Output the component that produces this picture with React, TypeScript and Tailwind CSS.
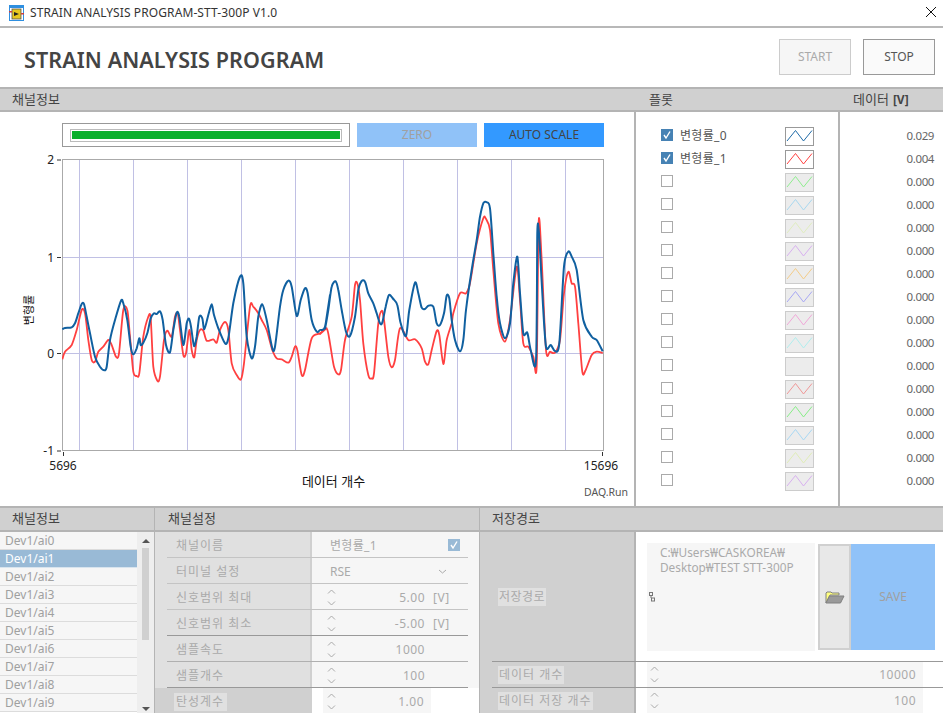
import type { ReactNode } from "react";

const font = { fontFamily: '"Noto Sans", "Noto Sans CJK KR", sans-serif' };

// traced from the plot, in plot zoom coordinates: [x, y]
const blueA = [[67,538],[75,534],[95,532],[105,520],[115,490],[125,462],[132,462],[140,500],[150,550],[165,620],[180,650],[193,661],[200,650],[210,570],[225,510],[243,452],[250,460],[262,510],[272,590],[280,613],[290,595],[298,565],[302,585],[310,578],[322,550],[332,505],[342,490],[350,492],[360,484],[368,510],[378,585],[390,607],[400,540],[410,488],[418,500],[430,585],[440,520],[447,506],[453,530],[462,588],[470,560],[478,500],[487,505],[493,538],[505,495],[515,463],[522,495],[535,535],[555,580],[565,565],[580,460],[600,380],[610,400],[620,560],[635,625],[645,590],[655,500],[667,463],[680,510],[697,595],[705,590],[720,470],[730,420],[745,392],[755,410],[770,498],[782,450],[795,415],[803,430],[815,510],[830,545],[840,540],[855,530],[870,435]];
const blueB = [[15,535],[25,480],[35,410],[47,394],[55,420],[65,480],[78,545],[90,558],[105,500],[115,420],[125,393],[135,395],[145,430],[160,460],[170,490],[180,520],[187,518],[197,470],[207,435],[220,447],[232,465],[242,520],[258,558],[268,480],[285,398],[295,430],[305,473],[315,477],[325,467],[340,470],[350,520],[360,525],[372,490],[380,437],[388,445],[395,510],[405,570],[420,604],[430,570],[438,480],[455,360],[470,270],[480,200],[490,160],[500,157],[510,175],[520,310],[530,440],[540,520],[555,565],[570,520],[580,400],[592,320],[600,430],[610,550],[622,548],[632,600],[648,632],[652,250],[656,240],[660,300],[668,450],[678,590],[692,585],[705,603],[718,580],[732,350],[745,305],[755,320],[770,360],[790,510],[815,560],[830,570],[848,604]];
const redA = [[67,628],[75,605],[95,585],[110,540],[125,480],[135,490],[145,570],[155,630],[165,635],[175,605],[190,590],[205,570],[215,585],[228,620],[237,610],[250,480],[262,480],[270,560],[280,665],[290,678],[298,670],[310,560],[325,500],[332,505],[340,650],[352,692],[360,680],[372,570],[382,542],[395,560],[405,500],[413,490],[420,540],[430,615],[438,610],[448,540],[455,600],[463,622],[470,570],[480,540],[490,542],[500,572],[520,568],[530,578],[540,540],[555,516],[565,540],[575,640],[590,675],[603,688],[612,640],[630,470],[640,470],[655,490],[665,510],[680,540],[697,600],[710,625],[725,628],[745,638],[755,620],[765,590],[772,600],[785,675],[795,660],[815,565],[840,550],[860,535]];
const redB = [[0,552],[20,535],[30,580],[42,650],[55,673],[63,660],[75,570],[95,500],[105,405],[112,400],[120,450],[130,580],[145,675],[155,685],[162,670],[175,520],[185,482],[192,510],[205,620],[215,652],[225,630],[240,535],[265,570],[285,568],[305,595],[315,635],[325,643],[335,600],[350,543],[358,555],[370,642],[380,570],[395,520],[400,490],[420,430],[438,430],[450,400],[470,280],[490,205],[497,205],[510,240],[520,360],[535,520],[555,575],[570,510],[590,350],[600,450],[610,580],[625,590],[640,620],[650,648],[656,215],[665,330],[678,600],[690,605],[705,608],[720,570],[732,430],[745,365],[755,400],[765,410],[775,520],[787,665],[797,660],[815,615],[830,605],[848,609]];

function toPage(a: number[][], b: number[][]) {
  const first = a.map(([x, y]) => [x / 3 + 40, y / 3 + 150]);
  const second = b.map(([x, y]) => [x / 3 + 320, y / 3 + 150]);
  return [...first, ...second];
}

function smooth(pts: number[][]) {
  let d = `M${pts[0][0]} ${pts[0][1]}`;
  for (let i = 0; i < pts.length - 1; i++) {
    const p0 = pts[Math.max(i - 1, 0)];
    const p1 = pts[i];
    const p2 = pts[i + 1];
    const p3 = pts[Math.min(i + 2, pts.length - 1)];
    const k = 7;
    d += ` C${(p1[0] + (p2[0] - p0[0]) / k).toFixed(1)} ${(p1[1] + (p2[1] - p0[1]) / k).toFixed(1)} ${(p2[0] - (p3[0] - p1[0]) / k).toFixed(1)} ${(p2[1] - (p3[1] - p1[1]) / k).toFixed(1)} ${p2[0].toFixed(1)} ${p2[1].toFixed(1)}`;
  }
  return d;
}

const plotColors = [
  "#1f6ba8", "#ff4040", "#90ee90", "#a8d8f0", "#e0ecc0", "#d8b0f0", "#f4cc88", "#a8a8f4",
  "#f0a8d8", "#b0eeee", "", "#f09898", "#88ee88", "#a8d8f4", "#e0ecb8", "#d8b0f0",
];
const plotNames = ["변형률_0", "변형률_1"];
const dataValues = ["0.029", "0.004"];

const channels = ["Dev1/ai0", "Dev1/ai1", "Dev1/ai2", "Dev1/ai3", "Dev1/ai4", "Dev1/ai5", "Dev1/ai6", "Dev1/ai7", "Dev1/ai8", "Dev1/ai9"];

function SectionHead({ children, className }: { children: ReactNode; className: string }) {
  return (
    <div className={`flex items-center border-y-2 border-[#b4b4b4] bg-[#d0d0d0] text-[13px] text-[#444] ${className}`}>
      {children}
    </div>
  );
}

function Spinner() {
  return (
    <svg width="9" height="17" viewBox="0 0 9 17" className="shrink-0" fill="none" stroke="#aaa" strokeWidth="1">
      <path d="M1 4.5 L4.5 1 L8 4.5" />
      <path d="M1 12.5 L4.5 16 L8 12.5" />
    </svg>
  );
}

function Chart() {
  const gridX = [79.5, 133.5, 187.5, 241.5, 295.5, 349.5, 403.5, 457.5, 511.5, 565.5];
  const ticks: [string, number][] = [["2", 160], ["1", 257.5], ["0", 353.5], ["-1", 451]];
  return (
    <svg width="634" height="359" viewBox="0 147 634 359" className="block" style={font}>
      {gridX.map((x) => (
        <line key={x} x1={x} x2={x} y1="160" y2="451" stroke="#c0c0e4" />
      ))}
      <line x1="62" x2="603" y1="257.5" y2="257.5" stroke="#c0c0e4" />
      <line x1="62" x2="603" y1="353.5" y2="353.5" stroke="#c0c0e4" />
      <rect x="62.5" y="159.5" width="541" height="291" fill="none" stroke="#aaa" />
      <clipPath id="plot">
        <rect x="62" y="159" width="542" height="292" />
      </clipPath>
      <g clipPath="url(#plot)" fill="none" strokeLinejoin="round">
        <path d={smooth(toPage(redA, redB))} stroke="#ff4040" strokeWidth="1.8" />
        <path d={smooth(toPage(blueA, blueB))} stroke="#1060a0" strokeWidth="2" />
      </g>
      {ticks.map(([label, y]) => (
        <g key={label}>
          <line x1="57" x2="61" y1={y} y2={y} stroke="#333" />
          <text x="54" y={y + 4} textAnchor="end" fontSize="12" fill="#222">{label}</text>
        </g>
      ))}
      <line x1="63.5" x2="63.5" y1="452" y2="456" stroke="#333" />
      <line x1="602.5" x2="602.5" y1="452" y2="456" stroke="#333" />
      <text x="63" y="470" textAnchor="middle" fontSize="12" fill="#222">5696</text>
      <text x="601" y="470" textAnchor="middle" fontSize="12" fill="#222">15696</text>
      <text x="333.5" y="486" textAnchor="middle" fontSize="13" fill="#111">데이터 개수</text>
      <text x="628" y="496" textAnchor="end" fontSize="10.5" fill="#555">DAQ.Run</text>
      <text transform="translate(33 310) rotate(-90)" textAnchor="middle" fontSize="11" fill="#111">변형률</text>
    </svg>
  );
}

function SettingRow({
  label,
  children,
  line,
  last,
  valueBg = "bg-[#f6f6f6]",
}: {
  label: string;
  children: ReactNode;
  line: string;
  last?: boolean;
  valueBg?: string;
}) {
  return (
    <div className={`relative flex h-[26px] shrink-0 ${last ? "bg-[#d0d0d0]" : "bg-[#e0e0e0]"}`}>
      <div className="flex w-[155px] items-center pl-[21px] pt-px text-[12px] tracking-[1px] text-[#aaa]">
        <span className={last ? "-ml-[2px] bg-[#e0e0e0] pl-[2px] pr-[3px]" : ""}>{label}</span>
      </div>
      <div className="w-[2px] bg-[#d0d0d0]" />
      <div className={`flex flex-1 items-center ${valueBg}`}>{children}</div>
      <div className={`absolute bottom-0 left-[12px] h-px w-[301px] ${line}`} />
    </div>
  );
}

function SpinValue({ value, unit }: { value: string; unit?: boolean }) {
  return (
    <div className="flex w-full items-center pl-[15px] pr-[54px] text-[12px] tracking-[0.5px] text-[#aaa]">
      <Spinner />
      <span className="ml-auto pt-px">{value}</span>
      {unit && <span className="absolute left-[278px] pt-px">[V]</span>}
    </div>
  );
}

function FolderIcon() {
  return (
    <svg width="20" height="13" viewBox="0 0 20 13">
      <path d="M1 12 V2 L2 1 H6 L7 2 H14 V4 H5 L1 12 Z" fill="#ffff80" stroke="#808080" />
      <path d="M1 12 L4.5 5 H19 L15.5 12 Z" fill="#9a9a9a" stroke="#808080" />
    </svg>
  );
}

export default function App() {
  return (
    <div className="flex h-[713px] w-[943px] flex-col overflow-hidden bg-white" style={font}>
      {/* window title */}
      <div className="flex h-[28px] shrink-0 items-center border-b-2 border-[#b8b8b8] pl-[9px] pr-[6px]">
        <svg width="15" height="16" viewBox="0 0 15 16" className="shrink-0">
          <rect x="0" y="0" width="15" height="16" fill="#2f8fe0" />
          <rect x="1" y="3" width="13" height="12" fill="#fff" />
          <rect x="3" y="4" width="9" height="10" fill="#e8c820" stroke="#555" strokeWidth="0.8" />
          <path d="M5 7 V11 L10 9 Z" fill="#222" />
          <rect x="0" y="6" width="3" height="1.5" fill="#d04040" />
          <rect x="12" y="8" width="3" height="1.5" fill="#d04040" />
        </svg>
        <span className="ml-[6px] text-[12px] tracking-[0.1px] text-[#333]">STRAIN ANALYSIS PROGRAM-STT-300P V1.0</span>
        <svg width="12" height="12" viewBox="0 0 12 12" className="mb-[2px] ml-auto" stroke="#111" strokeWidth="1">
          <path d="M1 1 L11 11 M11 1 L1 11" />
        </svg>
      </div>

      {/* program header */}
      <div className="flex h-[59px] shrink-0 items-center pl-[24px] pr-[8px]">
        <h1 className="mt-[6px] text-[21.5px] font-semibold tracking-[0.1px] text-[#444]">STRAIN ANALYSIS PROGRAM</h1>
        <button className="mb-px ml-auto h-[36px] w-[72px] border border-[#ccc] bg-[#f6f6f6] text-[12px] text-[#aaa]">START</button>
        <button className="mb-px ml-[12px] h-[36px] w-[72px] border border-[#999] bg-[#fafafa] text-[12px] text-[#555]">STOP</button>
      </div>

      {/* chart, plots, data */}
      <div className="flex h-[419px] shrink-0">
        <div className="flex w-[634px] flex-col">
          <SectionHead className="h-[25px] pl-[12px]">채널정보</SectionHead>
          <div className="flex h-[35px] items-end pl-[62px]">
            <div className="flex h-[24px] w-[288px] items-center border border-[#999] p-[5px_7px]">
              <div className="flex h-[13px] w-full items-center border border-[#bbb] px-[1px]">
                <div className="h-[8px] w-full bg-[#0ab02c]" />
              </div>
            </div>
            <button className="ml-[7px] h-[24px] w-[120px] bg-[#90c2f8] text-[12px] text-[#a0a0a0]">ZERO</button>
            <button className="ml-[7px] h-[24px] w-[120px] bg-[#3399ff] text-[12px] text-[#444]">AUTO SCALE</button>
          </div>
          <Chart />
        </div>
        <div className="flex w-[206px] flex-col border-x-2 border-[#b4b4b4]">
          <SectionHead className="-mx-[2px] h-[25px] pl-[15px]">플롯</SectionHead>
          <div className="flex flex-col pt-[13px]">
            {plotColors.map((color, i) => (
              <div key={i} className="flex h-[23px] items-center pl-[25px]">
                {i < 2 ? (
                  <div className="mb-[3px] flex h-[12px] w-[12px] items-center justify-center bg-[#4682b4]">
                    <svg width="10" height="10" viewBox="0 0 10 10" fill="none" stroke="#fff" strokeWidth="1.4">
                      <path d="M2 5 L4 8 L8 1.5" />
                    </svg>
                  </div>
                ) : (
                  <div className="mb-[3px] h-[12px] w-[12px] border border-[#aaa]" />
                )}
                <span className="mb-[2px] ml-[7px] w-[105px] text-[12px] tracking-[0.3px] text-[#555]">{plotNames[i]}</span>
                <div className={`h-[19px] w-[29px] border ${i < 2 ? "border-[#999] bg-white" : "border-[#ccc] bg-[#ececec]"}`}>
                  {color && (
                    <svg width="27" height="17" viewBox="0 0 27 17" fill="none" stroke={color} strokeWidth="1">
                      <path d="M1 13 L9.5 2.5 L17.5 13 L26 2.5" />
                    </svg>
                  )}
                </div>
              </div>
            ))}
          </div>
        </div>
        <div className="flex flex-1 flex-col">
          <SectionHead className="h-[25px] pl-[13px]">
            데이터 <span className="ml-1 text-[12px] font-bold">[V]</span>
          </SectionHead>
          <div className="flex flex-col pt-[13px]">
            {plotColors.map((_, i) => (
              <div key={i} className="flex h-[23px] items-center justify-end pb-[2px] pr-[9px] text-[11.5px] tracking-[-0.4px] text-[#666]">
                {dataValues[i] ?? "0.000"}
              </div>
            ))}
          </div>
        </div>
      </div>

      {/* settings */}
      <div className="flex flex-1">
        <div className="flex w-[154px] flex-col">
          <SectionHead className="h-[26px] shrink-0 pl-[12px] text-[#333]">채널정보</SectionHead>
          <div className="flex flex-1">
            <div className="w-[137px]">
              {channels.map((name, i) => (
                <div
                  key={name}
                  className={`flex h-[18px] items-center border-b pl-[5px] text-[12px] ${
                    i === 1 ? "border-[#d8e4ee] bg-[#99bad6] text-white" : "border-[#dcdcdc] bg-[#f6f6f6] text-[#a0a0a0]"
                  }`}
                >
                  {name}
                </div>
              ))}
            </div>
            <div className="flex w-[17px] flex-col items-center bg-[#eeeeee] pb-[3px] pt-[7px]">
              <div className="h-0 w-0 border-x-[4px] border-b-[4px] border-x-transparent border-b-[#555]" />
              <div className="mt-[5px] h-[92px] w-[7px] bg-[#d0d0d0]" />
              <div className="mt-auto h-0 w-0 border-x-[4px] border-t-[4px] border-x-transparent border-t-[#555]" />
            </div>
          </div>
        </div>
        <div className="w-[1px] bg-[#b4b4b4]" />
        <div className="flex w-[324px] flex-col">
          <SectionHead className="h-[26px] shrink-0 pl-[13px]">채널설정</SectionHead>
          <SettingRow label="채널이름" line="bg-[#c4c4c4]">
            <div className="flex w-full items-center pl-[18px] pr-[15px] text-[12px] tracking-[0.3px] text-[#aaa]">
              <span className="pt-px">변형률_1</span>
              <span className="ml-auto mr-[-1px] flex h-[12px] w-[12px] items-center justify-center bg-[#99bad6]">
                <svg width="10" height="10" viewBox="0 0 10 10" fill="none" stroke="#fff" strokeWidth="1.4">
                  <path d="M2 5 L4 8 L8 1.5" />
                </svg>
              </span>
              <span className="w-[5px]" />
            </div>
          </SettingRow>
          <SettingRow label="터미널 설정" line="bg-[#c4c4c4]">
            <div className="flex w-full items-center pl-[18px] text-[12px] text-[#aaa]">
              <span className="pt-px">RSE</span>
              <svg width="9" height="5" viewBox="0 0 9 5" fill="none" stroke="#aaa" className="ml-[87px]">
                <path d="M1 1 L4.5 4 L8 1" />
              </svg>
            </div>
          </SettingRow>
          <SettingRow label="신호범위 최대" line="bg-[#c4c4c4]">
            <SpinValue value="5.00" unit />
          </SettingRow>
          <SettingRow label="신호범위 최소" line="bg-[#999]">
            <SpinValue value="-5.00" unit />
          </SettingRow>
          <SettingRow label="샘플속도" line="bg-[#b0b0b0]">
            <SpinValue value="1000" />
          </SettingRow>
          <SettingRow label="샘플개수" line="bg-[#999]">
            <SpinValue value="100" />
          </SettingRow>
          <SettingRow label="탄성계수" line="bg-transparent" last valueBg="bg-white">
            <div className="ml-[11px] flex h-full w-[108px] items-center bg-[#f6f6f6] pl-[4px] pr-[7px] text-[12px] tracking-[0.5px] text-[#aaa]">
              <Spinner />
              <span className="ml-auto pt-px">1.00</span>
            </div>
          </SettingRow>
        </div>
        <div className="w-[1px] bg-[#b4b4b4]" />
        <div className="flex flex-1 flex-col">
          <SectionHead className="h-[26px] shrink-0 pl-[12px]">저장경로</SectionHead>
          <div className="flex h-[129px] shrink-0">
            <div className="flex w-[154px] items-center bg-[#d0d0d0] pl-[18px]">
              <span className="bg-[#e0e0e0] px-px text-[12px] tracking-[0.5px] text-[#aaa]">저장경로</span>
            </div>
            <div className="w-[2px] bg-[#b4b4b4]" />
            <div className="flex flex-1 pb-[10px] pl-[11px] pt-[11px]">
              <div className="relative h-[108px] w-[168px] bg-[#f6f6f6] pl-[13px] pt-[2px] text-[11.8px] leading-[15px] text-[#aaa]">
                C:₩Users₩CASKOREA₩
                <br />
                Desktop₩TEST STT-300P
                <svg width="6" height="10" viewBox="0 0 6 10" fill="none" stroke="#777" className="absolute left-[2px] top-[49px]">
                  <rect x="0.5" y="0.5" width="3" height="3" />
                  <rect x="2.5" y="6" width="3" height="3" />
                  <path d="M2 4 V6" />
                </svg>
              </div>
              <div className="ml-[3px] mt-[1px] flex h-[106px] w-[33px] items-center justify-center border-2 border-[#d0d0d0] bg-[#e8e8e8]">
                <FolderIcon />
              </div>
              <div className="mt-[1px] flex h-[106px] w-[84px] items-center justify-center bg-[#90c2f8] text-[12px] text-[#a0a0a0]">SAVE</div>
            </div>
          </div>
          {[
            ["데이터 개수", "10000"],
            ["데이터 저장 개수", "100"],
          ].map(([label, value]) => (
            <div key={label} className="relative flex h-[26px] shrink-0">
              <div className="absolute left-[12px] right-0 top-0 h-px bg-[#999]" />
              <div className="flex w-[154px] items-center bg-[#d0d0d0] pl-[18px] pt-px">
                <span className="bg-[#e0e0e0] px-px text-[12px] tracking-[1px] text-[#aaa]">{label}</span>
              </div>
              <div className="w-[2px] bg-[#b4b4b4]" />
              <div className="ml-[11px] mt-px flex w-[276px] items-center bg-[#f6f6f6] pl-[3px] pr-[7px] text-[12px] tracking-[0.5px] text-[#aaa]">
                <Spinner />
                <span className="ml-auto">{value}</span>
              </div>
            </div>
          ))}
        </div>
      </div>
    </div>
  );
}
